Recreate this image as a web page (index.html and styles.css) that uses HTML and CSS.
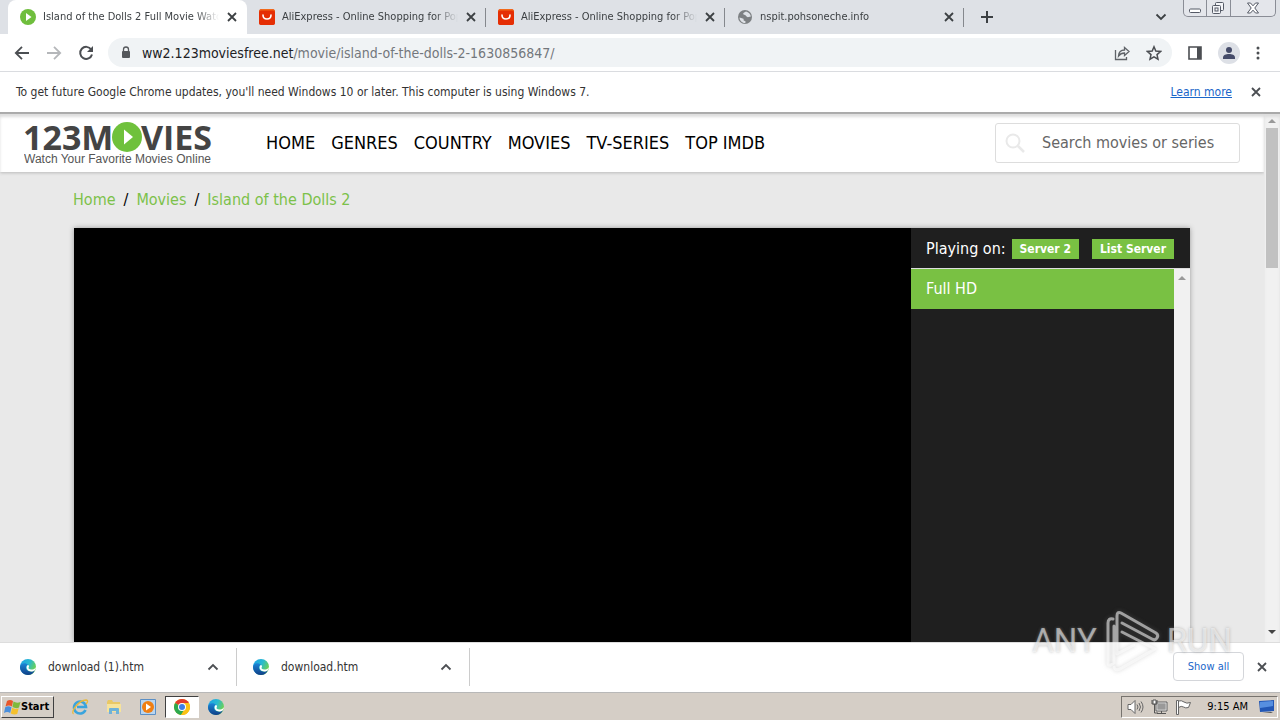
FILE: index.html
```html
<!DOCTYPE html>
<html lang="en">
<head>
<meta charset="utf-8">
<title>Island of the Dolls 2 Full Movie Watch</title>
<link rel="stylesheet" href="styles.css">
</head>
<body>
<svg class="defs" width="0" height="0" aria-hidden="true">
  <defs>
    <linearGradient id="edgeTop" x1="0" y1="0" x2="1" y2="0.5"><stop offset="0" stop-color="#1a9fe8"/><stop offset="0.55" stop-color="#29b9d0"/><stop offset="1" stop-color="#6fd34e"/></linearGradient>
    <linearGradient id="edgeLow" x1="0" y1="0" x2="0" y2="1"><stop offset="0" stop-color="#1b86d8"/><stop offset="1" stop-color="#103f86"/></linearGradient>
    <symbol id="close" viewBox="0 0 10 10"><path d="M1 1l8 8M9 1L1 9" fill="none" stroke="currentColor" stroke-width="1.800"/></symbol>
    <symbol id="ali" viewBox="0 0 16 16"><rect width="16" height="16" rx="3" fill="#e52e04"/><path d="M0 3q0-3 3-3h10q3 0 3 3z" fill="#f26a1b"/><rect y="1.500" width="16" height="14.500" rx="2" fill="#e52e04"/><path d="M4 6q0 4 4 4t4-4" fill="none" stroke="#fff" stroke-width="1.600" stroke-linecap="round"/></symbol>
    <symbol id="edge" viewBox="0 0 16 16"><circle cx="8" cy="8" r="8" fill="url(#edgeTop)"/><path d="M0 8c0-4 6-5 8-2-3 0-3 6 2 6.500 2 .2 4-.6 5-1.500-1 3-4 5-7 5-5 0-8-4-8-8z" fill="url(#edgeLow)"/><path d="M8 6c1.500.7 1 2 .6 2.600-.5.900.6 2 2.500 2 2.200 0 4.400-1 4.800-2.600-.1 1.300-.3 2.200-1 3.200-1.500 1.400-5.500 1.900-7.200-.2C6 9 6.600 6.500 8 6z" fill="#fff"/></symbol>
    <symbol id="chevUp" viewBox="0 0 12 8"><path d="M1.500 6.500L6 2l4.500 4.500" fill="none" stroke="#4c4f53" stroke-width="1.800"/></symbol>
  </defs>
</svg>

<header class="tabstrip">
  <div class="tab tab-active">
    <svg class="favicon" viewBox="0 0 16 16"><circle cx="8" cy="8" r="8" fill="#6fbe3d"/><path d="M6 4l5.500 4L6 12z" fill="#fff"/></svg>
    <span class="tab-title">Island of the Dolls 2 Full Movie Watch</span>
    <button class="icon-btn" aria-label="Close tab"><svg class="x"><use href="#close"/></svg></button>
  </div>
  <div class="tab">
    <svg class="favicon"><use href="#ali"/></svg>
    <span class="tab-title">AliExpress - Online Shopping for Popular</span>
    <button class="icon-btn" aria-label="Close tab"><svg class="x"><use href="#close"/></svg></button>
  </div>
  <div class="tab">
    <svg class="favicon"><use href="#ali"/></svg>
    <span class="tab-title">AliExpress - Online Shopping for Popular</span>
    <button class="icon-btn" aria-label="Close tab"><svg class="x"><use href="#close"/></svg></button>
  </div>
  <div class="tab">
    <svg class="favicon" viewBox="0 0 16 16"><circle cx="8" cy="8" r="7" fill="#7d8083"/><path d="M2.500 8.500l4 1.200.3 2 1.600.3v2.300C5 14 2.500 11.500 2.500 8.500zM9 2.500c-1 1-2.800 1-2.800 2.200 0 1.300 2 .8 2.500 1.700.5.800 1.700 2.200 3 1.600l2.200-.5C13.500 5 11.500 3 9 2.500z" fill="#dee1e6"/></svg>
    <span class="tab-title">nspit.pohsoneche.info</span>
    <button class="icon-btn" aria-label="Close tab"><svg class="x"><use href="#close"/></svg></button>
  </div>
  <button class="icon-btn new-tab" aria-label="New tab"><svg width="12" height="12" viewBox="0 0 12 12"><path d="M6 0v12M0 6h12" stroke="#3c4043" stroke-width="2"/></svg></button>
  <button class="icon-btn tab-search" aria-label="Search tabs"><svg width="12" height="8" viewBox="0 0 12 8"><path d="M1.500 1.500L6 6l4.500-4.500" fill="none" stroke="#3c4043" stroke-width="1.800"/></svg></button>
  <div class="win-controls">
    <button aria-label="Minimize"><svg width="14" height="6" viewBox="0 0 14 6"><rect x="1.500" y="1" width="11" height="3.500" rx="1" fill="#fff" stroke="#555a66"/></svg></button>
    <button aria-label="Restore"><svg width="14" height="14" viewBox="0 0 14 14" fill="#f4f5f8" stroke="#555a66"><rect x="4.500" y="1.500" width="8" height="8" rx="1"/><rect x="1.500" y="4.500" width="8" height="8" rx="1"/><rect x="4" y="7" width="3" height="3"/></svg></button>
    <button aria-label="Close"><svg width="14" height="12" viewBox="0 0 14 12"><path d="M1.500 1h3L7 3.800 9.500 1h3L8.800 6l3.700 5h-3L7 8.200 4.500 11h-3L5.200 6z" fill="#fff" stroke="#555a66"/></svg></button>
  </div>
</header>

<div class="toolbar">
  <button class="icon-btn" aria-label="Back"><svg width="16" height="16" viewBox="0 0 16 16"><path d="M15 8H2M8 1.800L1.800 8 8 14.200" fill="none" stroke="#4b4e52" stroke-width="1.800"/></svg></button>
  <button class="icon-btn" aria-label="Forward"><svg width="16" height="16" viewBox="0 0 16 16"><path d="M1 8h13M8 1.800L14.200 8 8 14.200" fill="none" stroke="#b5b7ba" stroke-width="1.800"/></svg></button>
  <button class="icon-btn" aria-label="Reload"><svg width="16" height="16" viewBox="0 0 16 16"><path d="M13.200 4.500A6 6 0 1 0 14 9.500" fill="none" stroke="#4b4e52" stroke-width="2"/><path d="M15 1v6H9z" fill="#4b4e52"/></svg></button>
  <div class="omnibox">
    <svg width="10" height="14" viewBox="0 0 10 14"><rect x="1" y="5" width="8" height="7" rx="1" fill="#55585c"/><path d="M2.500 6V3.500a2.500 2.500 0 0 1 5 0V6" fill="none" stroke="#55585c" stroke-width="1.300"/></svg>
    <span class="url"><b>ww2.123moviesfree.net</b>/movie/island-of-the-dolls-2-1630856847/</span>
    <button class="icon-btn" aria-label="Share"><svg width="16" height="16" viewBox="0 0 16 16" fill="none" stroke="#5f6368" stroke-width="1.300"><path d="M1.500 5v9.500h11V12"/><path d="M4.500 11c.3-4 2.500-6 6-6V2.500L15 6.500l-4.500 4V8c-3 0-4.500 1-6 3z"/></svg></button>
    <button class="icon-btn" aria-label="Bookmark"><svg width="16" height="16" viewBox="0 0 16 16"><path d="M8 1.800l1.800 4.300 4.700.4-3.500 3.100 1 4.600L8 11.800l-4 2.400 1-4.600L1.500 6.500l4.700-.4z" fill="none" stroke="#4b4e52" stroke-width="1.500"/></svg></button>
  </div>
  <button class="icon-btn" aria-label="Side panel"><svg width="14" height="14" viewBox="0 0 14 14"><path d="M1 1h12v12H1z" fill="none" stroke="#4b4e52" stroke-width="1.600"/><path d="M9 1h4v12H9z" fill="#4b4e52"/></svg></button>
  <button class="icon-btn" aria-label="Profile"><svg width="22" height="22" viewBox="0 0 22 22"><circle cx="11" cy="11" r="11" fill="#dde0e6"/><circle cx="11" cy="8" r="3" fill="#454b69"/><path d="M5 17v-1.500C5 13 8 12 11 12s6 1 6 3.500V17z" fill="#454b69"/></svg></button>
  <button class="icon-btn" aria-label="Menu"><svg width="4" height="14" viewBox="0 0 4 14" fill="#4b4e52"><circle cx="2" cy="2" r="1.500"/><circle cx="2" cy="7" r="1.500"/><circle cx="2" cy="12" r="1.500"/></svg></button>
</div>

<div class="infobar">
  <span>To get future Google Chrome updates, you'll need Windows 10 or later. This computer is using Windows 7.</span>
  <a href="#">Learn more</a>
  <button class="icon-btn" aria-label="Dismiss"><svg class="x"><use href="#close"/></svg></button>
</div>

<div class="viewport">
  <div class="page">
    <div class="site-head">
      <a class="logo" href="#" aria-label="123Movies">
        <svg width="190" height="44" viewBox="0 0 190 44">
          <text class="logo-big" x="-1" y="29">123M</text>
          <circle cx="103" cy="16" r="15" fill="#6fc13c"/><path d="M100 8.500l9 7.500-9 7.500z" fill="#fff"/>
          <text class="logo-big" x="188" y="29" text-anchor="end">VIES</text>
          <text class="logo-small" x="0" y="42">Watch Your Favorite Movies Online</text>
        </svg>
      </a>
      <nav class="menu">
        <a href="#">HOME</a><a href="#">GENRES</a><a href="#">COUNTRY</a><a href="#">MOVIES</a><a href="#">TV-SERIES</a><a href="#">TOP IMDB</a>
      </nav>
      <label class="search">
        <svg width="20" height="20" viewBox="0 0 20 20"><circle cx="8" cy="8" r="6.500" fill="none" stroke="#e9e9e9" stroke-width="2"/><path d="M13 13l6 6" stroke="#e9e9e9" stroke-width="2.500"/></svg>
        <input type="text" placeholder="Search movies or series" aria-label="Search movies or series">
      </label>
    </div>
    <div class="crumbs"><a href="#">Home</a><span>/</span><a href="#">Movies</a><span>/</span><a href="#">Island of the Dolls 2</a></div>
    <div class="player">
      <div class="video"></div>
      <div class="side">
        <div class="servers"><span>Playing on:</span><button>Server 2</button><button>List Server</button></div>
        <div class="episodes">
          <div class="list"><a href="#">Full HD</a></div>
          <div class="inner-scroll"><svg width="8" height="4" viewBox="0 0 8 4"><path d="M4 0l4 4H0z" fill="#999"/></svg></div>
        </div>
      </div>
    </div>
  </div>
  <div class="scrollbar">
    <svg width="8" height="4" viewBox="0 0 8 4"><path d="M4 0l4 4H0z" fill="#999"/></svg>
    <div class="thumb"></div>
    <svg width="8" height="4" viewBox="0 0 8 4"><path d="M0 0h8L4 4z" fill="#444"/></svg>
  </div>
</div>

<div class="downloads">
  <div class="dl"><svg class="favicon"><use href="#edge"/></svg><span>download (1).htm</span><button class="icon-btn" aria-label="Options"><svg width="12" height="8"><use href="#chevUp"/></svg></button></div>
  <div class="dl"><svg class="favicon"><use href="#edge"/></svg><span>download.htm</span><button class="icon-btn" aria-label="Options"><svg width="12" height="8"><use href="#chevUp"/></svg></button></div>
  <button class="show-all">Show all</button>
  <button class="icon-btn" aria-label="Close downloads"><svg class="x"><use href="#close"/></svg></button>
</div>

<footer class="taskbar">
  <button class="start"><svg width="17" height="16" viewBox="0 0 17 16"><path d="M3 2q3-2 6 0L8 7.500Q5 5.500 1.500 7.500z" fill="#e8562a"/><path d="M9.500 2.500q3 2 7 .5L15 8.500q-3 1.500-6.500-.5z" fill="#7fb93c"/><path d="M1.200 8.300q3-2 6.300 0L6.200 14q-3-2-6.200 0z" fill="#4a8fdc"/><path d="M8.200 8.800q3 2 6.500.5L13.200 15q-3 1-6.500-.5z" fill="#f5c02c"/></svg>Start</button>
  <div class="quick">
    <button aria-label="Internet Explorer"><svg width="18" height="18" viewBox="0 0 18 18"><path d="M14.500 12A6 6 0 1 1 15 9H6" fill="none" stroke="#3aa4dd" stroke-width="2.600"/><path d="M2.500 16C-1 14 8 2 15 2c3 .5 1 3 0 4" fill="none" stroke="#e9b93a" stroke-width="1.300"/></svg></button>
    <button aria-label="Explorer"><svg width="18" height="18" viewBox="0 0 18 18"><path d="M2 4l1-2h4l1 2h7v9H2z" fill="#e9c865"/><path d="M2 6h14v8H2z" fill="#f7e39a"/><path d="M4 16v-5q0-1 1-1h8q1 0 1 1v5h-3v-3H7v3z" fill="#6fb2d8"/></svg></button>
    <button aria-label="Media Player"><svg width="16" height="16" viewBox="0 0 16 16"><path d="M.5.500h15v15H.5z" fill="#b9d5ef" stroke="#5b8fc5"/><circle cx="8" cy="8" r="6" fill="#f07f13"/><path d="M6 4.500l5 3.500-5 3.500z" fill="#fff"/></svg></button>
    <button class="running" aria-label="Chrome"><svg width="16" height="16" viewBox="0 0 16 16"><circle cx="8" cy="8" r="8" fill="#fbc116"/><path d="M8 8L1.100 4A8 8 0 0 1 14.900 4z" fill="#e33b2e"/><path d="M8 8L1.100 4a8 8 0 0 0 5.900 12l3.500-6z" fill="#2da94f"/><path d="M8 4h6.900A8 8 0 0 1 7 16l4.500-6z" fill="#fbc116"/><circle cx="8" cy="8" r="4" fill="#fff"/><circle cx="8" cy="8" r="3" fill="#3f7ee8"/></svg></button>
    <button aria-label="Edge"><svg class="favicon"><use href="#edge"/></svg></button>
  </div>
  <div class="tray">
    <svg width="17" height="16" viewBox="0 0 17 16" fill="#fff" stroke="#666"><path d="M1 5.500h3l4-4v13l-4-4H1z"/><path d="M10 5.500q2 2.500 0 5M12 4q3 4 0 8M14 2.500q4 5.500 0 11" fill="none"/></svg>
    <svg width="17" height="16" viewBox="0 0 17 16" stroke="#555"><rect x="5.500" y="3.500" width="10" height="8" fill="#999" stroke="#fff" stroke-width="1.500"/><path d="M5 3h11v9H5zM6 14.500h9M10.500 12v2" fill="none"/><path d="M1 1v4h5V1M3.500 5v9H7" fill="none"/><path d="M2 1h3v4H2z" fill="#fff"/></svg>
    <svg width="17" height="16" viewBox="0 0 17 16" fill="#fff" stroke="#666"><path d="M1.500 1.500h2v14h-2zM3.500 2q3-1 5.500 1t6.500.5l-2 5q-3 1-5-.5t-5 .5z"/></svg>
    <time>9:15 AM</time>
    <svg width="16" height="14" viewBox="0 0 16 14"><path d="M0 1l15-1v11L1 12z" fill="#2257b5"/><path d="M1 2l13-1v5L1 8z" fill="#568fe0"/><path d="M3 13l9-1 2 1z" fill="#555"/></svg>
  </div>
</footer>

<div class="watermark" aria-hidden="true">
  <span>ANY</span>
  <svg width="58" height="66" viewBox="0 0 58 66"><path d="M10 11Q5 10 5 15V55q0 3 3 2l3-2V18M14 46V8q0-5 4-3l35 20q3 2 1 5t-5 1L19 15M14 46l17-9M19 24l33 17L17 61q-5 2-6-2" fill="none" stroke="#fff" stroke-opacity=".55" stroke-width="3" stroke-linejoin="round" stroke-linecap="round"/></svg>
  <span>RUN</span>
</div>
</body>
</html>
```

FILE: styles.css
```css
* { box-sizing: border-box; }
body {
  margin: 0;
  height: 100vh;
  display: flex;
  flex-direction: column;
  overflow: hidden;
  position: relative;
  background: #fff;
  color: #333;
  font: 12px/16px "DejaVu Sans Condensed", "Noto Sans", sans-serif;
}
.defs { position: absolute; }
button { font: inherit; padding: 0; border: 0; background: none; color: inherit; }
svg { display: block; flex: none; }
.icon-btn { display: flex; align-items: center; justify-content: center; flex: none; color: #4b4e52; }
.x { width: 10px; height: 10px; }
.favicon { width: 16px; height: 16px; }

.tabstrip { display: flex; height: 34px; padding-left: 8px; background: #dee1e6; flex: none; font-size: 11px; }
.tab { display: flex; align-items: center; gap: 7px; flex: 0 1 239px; min-width: 0; padding: 0 9px 0 12px; position: relative; color: #3c4043; }
.tab:not(.tab-active)::after { content: ""; position: absolute; right: 0; top: 8px; height: 19px; border-right: 1px solid #85888d; }
.tab-active { background: #fff; border-radius: 8px 8px 0 0; }
.tab-title { flex: 1; min-width: 0; overflow: hidden; white-space: nowrap; mask-image: linear-gradient(to right, #000 calc(100% - 24px), transparent); }
.tab .icon-btn { color: #3c4043; width: 12px; }
.new-tab { margin-left: 17px; }
.tab-search { margin-left: auto; margin-right: 16px; }
.win-controls { display: flex; height: 17px; width: 93px; margin-right: 4px; border: 1px solid #8a8d96; border-top: 0; border-radius: 0 0 5px 5px; background: #e4e6eb; }
.win-controls button { flex: 1; display: flex; align-items: center; justify-content: center; }
.win-controls button:first-child { align-items: flex-end; padding-bottom: 2px; }
.win-controls button:last-child { flex: 2; }
.win-controls button + button { border-left: 1px solid #8a8d96; }

.toolbar { display: flex; align-items: center; gap: 16px; height: 38px; padding: 0 20px 0 14px; border-bottom: 1px solid #dadce0; flex: none; }
.omnibox { flex: 1; display: flex; align-items: center; gap: 11px; height: 29px; margin-left: -2px; padding: 0 10px 0 13px; border-radius: 15px; background: #f0f3f5; }
.omnibox .icon-btn + .icon-btn { margin-left: 5px; }
.url { flex: 1; font-size: 14px; color: #73777c; white-space: nowrap; }
.url b { font-weight: 400; color: #202124; }

.infobar { display: flex; align-items: center; height: 40px; padding: 0 19px 0 16px; flex: none; }
.infobar a { margin-left: auto; margin-right: 19px; color: #1a66c9; text-decoration: underline; }

.viewport { flex: 1; display: flex; min-height: 0; border-top: 2px solid #a9a9a9; background: #e9e9e9; }
.page { flex: 1; min-width: 0; display: flex; flex-direction: column; font-size: 16px; line-height: 24px; }
.site-head { display: flex; align-items: center; height: 58px; padding: 0 24px; background: #fff; box-shadow: 0 1px 3px #bbb, inset 0 3px 3px #ddd; flex: none; }
.logo-big { font: 700 34px "Open Sans", sans-serif; fill: #444; }
.logo-small { font: 12px "Liberation Sans", sans-serif; fill: #555; }
.menu { display: flex; gap: 16px; margin-left: 52px; font-size: 18px; }
.menu a { color: #000; text-decoration: none; white-space: nowrap; }
.search { display: flex; align-items: center; gap: 17px; width: 245px; height: 40px; margin-left: auto; padding-left: 9px; border: 1px solid #ddd; border-radius: 3px; }
.search input { flex: 1; min-width: 0; border: 0; outline: 0; padding: 0; font: inherit; background: none; }
.search input::placeholder { color: #666; opacity: 1; }
.crumbs { display: flex; gap: 8px; padding: 16px 73px; flex: none; }
.crumbs a { color: #7cc14a; text-decoration: none; }
.crumbs span { color: #000; }
.player { flex: 1; display: flex; margin: 0 74px; box-shadow: 0 0 5px #999; min-height: 0; }
.video { flex: 3; background: #000; }
.side { flex: 1; display: flex; flex-direction: column; background: #1f1f1f; color: #fff; }
.servers { display: flex; align-items: center; height: 40px; padding: 2px 16px 0 15px; white-space: nowrap; }
.servers button { height: 20px; padding: 0 8px; background: #79c143; font-size: 12px; font-weight: 700; line-height: 20px; }
.servers button:last-child { margin-left: 13px; }
.servers span { flex: 1; }
.episodes { flex: 1; display: flex; border-top: 1px solid #ddd; }
.list { flex: 1; }
.list a { display: block; height: 40px; padding: 0 15px; background: #79c143; color: #fff; line-height: 40px; text-decoration: none; }
.inner-scroll { width: 16px; padding: 7px 4px; background: #f1f1f1; }
.scrollbar { display: flex; flex-direction: column; align-items: center; width: 16px; padding: 5px 0 8px; background: #f1f1f1; box-shadow: inset 0 3px 3px #ddd; }
.thumb { width: 12px; height: 140px; margin: 5px 0 auto; background: #c1c1c1; }

.downloads { display: flex; align-items: center; height: 51px; padding: 0 13px 2px 0; border-top: 1px solid #ddd; border-bottom: 1px solid #b8b8b8; background: #fff; flex: none; }
.dl { display: flex; align-items: center; gap: 12px; flex: 0 1 237px; height: 38px; padding: 0 17px 0 20px; border-right: 1px solid #ccc; }
.dl + .dl { flex-basis: 233px; padding-left: 16px; }
.dl span { flex: 1; }
.show-all { width: 71px; height: 29px; margin-left: auto; margin-right: 13px; border: 1px solid #d4d6da; border-radius: 4px; color: #1a66c9; font-size: 11px; }

.taskbar { display: flex; align-items: center; height: 27px; padding: 2px 2px 2px 1px; background: #d5cec6; color: #000; font-size: 11px; flex: none; }
.start { display: flex; align-items: center; width: 53px; height: 22px; padding-left: 2px; border: 1px solid; border-color: #fff #404040 #404040 #fff; font-weight: 700; }
.quick { display: flex; align-items: center; margin-left: 9px; }
.quick button { display: flex; align-items: center; justify-content: center; width: 34px; height: 22px; }
.quick .running { background: #fff; border: 1px solid; border-color: #404040 #fff #fff #404040; }
.tray { display: flex; align-items: center; gap: 7px; height: 22px; margin-left: auto; padding: 0 2px 0 5px; border: 1px solid; border-color: #77736e #fff #fff #77736e; }
.tray time { margin: 0 4px 0 8px; }

.watermark { position: absolute; right: 48px; bottom: 46px; display: flex; align-items: center; gap: 6px; font: 33px/66px Roboto, sans-serif; color: rgba(255, 255, 255, .55); text-shadow: 0 0 3px rgba(140, 140, 140, .6); pointer-events: none; }
.watermark svg { filter: drop-shadow(0 0 2px rgba(140, 140, 140, .6)); }
```
